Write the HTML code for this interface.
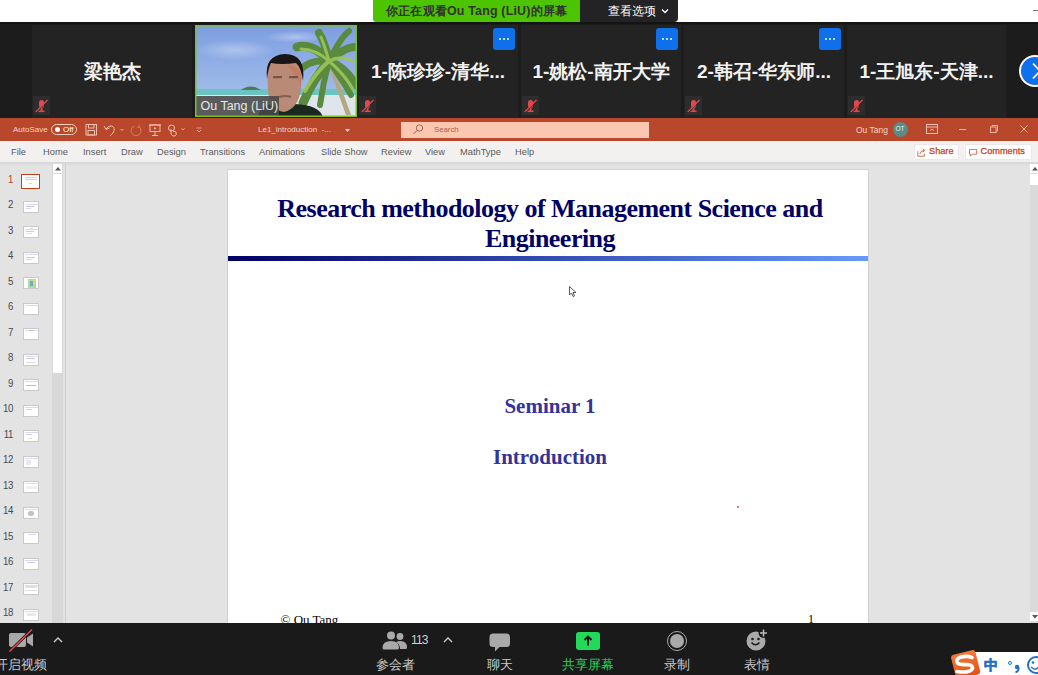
<!DOCTYPE html>
<html><head><meta charset="utf-8">
<style>
*{margin:0;padding:0;box-sizing:border-box}
html,body{width:1038px;height:675px;overflow:hidden;background:#fff;font-family:"Liberation Sans",sans-serif}
.a{position:absolute}
#strip{left:0;top:22px;width:1038px;height:96px;background:#1c1c1c;border-top:2px solid #141414}
.tile{position:absolute;top:1px;height:93px;background:#232323}
.tname{position:absolute;left:0;right:0;top:33.5px;text-align:center;color:#f2f2f2;font-weight:bold;font-size:19px;white-space:nowrap}
.mic{position:absolute;left:1px;top:71px;width:17px;height:19px;background:#2d2d2d}
.mic svg{position:absolute;left:2px;top:3px}
.dots{position:absolute;right:3.5px;top:3px;width:22px;height:22px;background:#0e71eb;border-radius:3px}
.dots i{position:absolute;top:9.5px;width:2px;height:2px;border-radius:50%;background:#fff}
#ppt-title{left:0;top:118px;width:1038px;height:23px;background:#b9472b}
#menu{left:0;top:141px;width:1038px;height:21px;background:#f3f1f0}
#content{left:0;top:162px;width:1038px;height:461px;background:#e3e3e3}
#zbar{left:0;top:623px;width:1038px;height:52px;background:#1a1a1a}
.mi{position:absolute;top:6px;font-size:9.3px;color:#5a5a5a}
#slide{left:228px;top:170px;width:640px;height:453px;background:#fff}
.ttl{position:absolute;left:2px;width:640px;text-align:center;font-family:"Liberation Serif",serif;font-weight:bold;color:#000066;font-size:26px;white-space:nowrap;letter-spacing:-0.52px}
.sub{position:absolute;left:2px;width:640px;text-align:center;font-family:"Liberation Serif",serif;font-weight:bold;color:#333399;font-size:21px}
.tn{position:absolute;width:14px;text-align:right;left:-1.5px;font-size:11px;color:#4a4a4a;letter-spacing:-0.4px;transform:scaleX(0.88);transform-origin:right}
.th{position:absolute;left:23px;width:16px;height:12px;background:#fff;border:1px solid #c9c9c9}
.th i,.sel i{position:absolute;display:block;opacity:0.4}
.zl{position:absolute;top:34px;color:#c8c8c8;font-size:12.5px;white-space:nowrap}
.tb{color:#f6d3c5;font-size:8px}
</style></head><body>
<!-- top white bar -->
<div class="a" style="left:1033px;top:10px;width:5px;height:1px;background:#777"></div>
<!-- green banner -->
<div class="a" style="left:373px;top:0;width:207px;height:22px;background:#4cc400;border-radius:0 0 0 3px"></div>
<div class="a" style="left:386px;top:2.5px;color:#333;font-size:12.4px;font-weight:bold;white-space:nowrap;letter-spacing:0.2px">你正在观看Ou Tang (LiU)的屏幕</div>
<div class="a" style="left:580px;top:0;width:98px;height:22px;background:#232326;border-radius:0 0 4px 0"></div>
<div class="a" style="left:608px;top:3px;color:#fff;font-size:12px;white-space:nowrap">查看选项</div>
<svg class="a" style="left:661px;top:8px" width="8" height="6"><path d="M1 1.5 L4 4.5 L7 1.5" stroke="#fff" stroke-width="1.3" fill="none"/></svg>

<div id="strip" class="a">
  <div class="tile" style="left:32px;width:160px"><div class="tname">梁艳杰</div><div class="mic"><svg width="13" height="14" viewBox="0 0 13 14"><rect x="4" y="1" width="5" height="8" rx="2.5" fill="#e0484c"/><rect x="5.5" y="9" width="2" height="3" fill="#e0484c"/><rect x="3.5" y="11.5" width="6" height="1.6" fill="#e0484c"/><path d="M0.8 13 L12.5 1" stroke="#e0484c" stroke-width="1.3"/><path d="M1.6 13.6 L13 2" stroke="#2d2d2d" stroke-width="0.6"/></svg></div></div>
  <div class="tile" style="left:358px;width:160px"><div class="tname">1-陈珍珍-清华...</div><div class="mic"><svg width="13" height="14" viewBox="0 0 13 14"><rect x="4" y="1" width="5" height="8" rx="2.5" fill="#e0484c"/><rect x="5.5" y="9" width="2" height="3" fill="#e0484c"/><rect x="3.5" y="11.5" width="6" height="1.6" fill="#e0484c"/><path d="M0.8 13 L12.5 1" stroke="#e0484c" stroke-width="1.3"/><path d="M1.6 13.6 L13 2" stroke="#2d2d2d" stroke-width="0.6"/></svg></div><div class="dots"><i style="left:6.7px"></i><i style="left:10.7px"></i><i style="left:14.7px"></i></div></div>
  <div class="tile" style="left:521px;width:160px"><div class="tname">1-姚松-南开大学</div><div class="mic"><svg width="13" height="14" viewBox="0 0 13 14"><rect x="4" y="1" width="5" height="8" rx="2.5" fill="#e0484c"/><rect x="5.5" y="9" width="2" height="3" fill="#e0484c"/><rect x="3.5" y="11.5" width="6" height="1.6" fill="#e0484c"/><path d="M0.8 13 L12.5 1" stroke="#e0484c" stroke-width="1.3"/><path d="M1.6 13.6 L13 2" stroke="#2d2d2d" stroke-width="0.6"/></svg></div><div class="dots"><i style="left:6.7px"></i><i style="left:10.7px"></i><i style="left:14.7px"></i></div></div>
  <div class="tile" style="left:684px;width:160px"><div class="tname">2-韩召-华东师...</div><div class="mic"><svg width="13" height="14" viewBox="0 0 13 14"><rect x="4" y="1" width="5" height="8" rx="2.5" fill="#e0484c"/><rect x="5.5" y="9" width="2" height="3" fill="#e0484c"/><rect x="3.5" y="11.5" width="6" height="1.6" fill="#e0484c"/><path d="M0.8 13 L12.5 1" stroke="#e0484c" stroke-width="1.3"/><path d="M1.6 13.6 L13 2" stroke="#2d2d2d" stroke-width="0.6"/></svg></div><div class="dots"><i style="left:6.7px"></i><i style="left:10.7px"></i><i style="left:14.7px"></i></div></div>
  <div class="tile" style="left:847px;width:159px"><div class="tname">1-王旭东-天津...</div><div class="mic"><svg width="13" height="14" viewBox="0 0 13 14"><rect x="4" y="1" width="5" height="8" rx="2.5" fill="#e0484c"/><rect x="5.5" y="9" width="2" height="3" fill="#e0484c"/><rect x="3.5" y="11.5" width="6" height="1.6" fill="#e0484c"/><path d="M0.8 13 L12.5 1" stroke="#e0484c" stroke-width="1.3"/><path d="M1.6 13.6 L13 2" stroke="#2d2d2d" stroke-width="0.6"/></svg></div></div>
  <!-- video tile -->
  <svg class="a" style="left:195px;top:1px" width="162" height="92" viewBox="0 0 162 92">
    <defs>
      <linearGradient id="sky" x1="0" y1="0" x2="0" y2="1">
        <stop offset="0" stop-color="#7c9de0"/><stop offset="0.45" stop-color="#92b0e6"/><stop offset="1" stop-color="#adc5ea"/>
      </linearGradient>
      <radialGradient id="cl" cx="0.5" cy="0.5" r="0.5"><stop offset="0" stop-color="#c0d0f0" stop-opacity="0.7"/><stop offset="1" stop-color="#c0d0f0" stop-opacity="0"/></radialGradient>
    </defs>
    <rect x="0" y="0" width="162" height="92" fill="url(#sky)"/>
    <ellipse cx="40" cy="25" rx="40" ry="10" fill="url(#cl)"/>
    <ellipse cx="100" cy="12" rx="30" ry="6" fill="url(#cl)"/>
    <rect x="0" y="64" width="162" height="7" fill="#6cc4c2"/>
    <rect x="0" y="70" width="162" height="22" fill="#dfe5ea"/>
    <path d="M46 65 Q52 60 60 62 L66 65 Z" fill="#4f7a5a"/>
    <!-- palm trunk -->
    <path d="M134 42 Q141 62 151 90 L156 90 Q146 62 138 42 Z" fill="#b3a882"/>
    <g stroke="#5a8a3e" fill="none" stroke-linecap="round">
      <path d="M134 36 Q118 18 102 22" stroke-width="9"/>
      <path d="M134 36 Q114 34 104 46" stroke-width="7"/>
      <path d="M134 36 Q118 54 108 78" stroke-width="9"/>
      <path d="M134 36 Q128 58 125 80" stroke-width="6"/>
      <path d="M134 36 Q150 22 160 22" stroke-width="8"/>
      <path d="M134 36 Q152 44 160 60" stroke-width="9"/>
      <path d="M134 36 Q130 18 124 8" stroke-width="8"/>
      <path d="M134 36 Q146 12 154 6" stroke-width="6"/>
      <path d="M134 36 Q148 56 156 70" stroke-width="6"/>
    </g>
    <g stroke="#9cc65a" fill="none" stroke-linecap="round" opacity="0.9">
      <path d="M134 36 Q120 48 110 66" stroke-width="4"/>
      <path d="M134 36 Q146 30 158 36" stroke-width="3.5"/>
      <path d="M134 36 Q130 22 126 12" stroke-width="3"/>
      <path d="M134 36 Q120 24 106 24" stroke-width="3"/>
      <path d="M134 36 Q150 50 158 64" stroke-width="3"/>
    </g>
    <!-- person -->
    <path d="M63 92 Q64 80 80 79 L100 79 Q124 80 128 92 Z" fill="#1a2820"/>
    <path d="M72 44 Q72 31 90 31 Q108 31 107 47 L106 64 Q103 84 89 87 Q75 85 73 66 Z" fill="#b98a76"/>
    <path d="M92 40 Q104 40 106 52 L106 62 Q100 48 92 40 Z" fill="#d07050" opacity="0.5"/>
    <path d="M72 54 Q69 30 90 29 Q111 29 108 56 Q106 42 101 38 Q86 40 76 38 Q73 44 72 54 Z" fill="#1a1616"/>
    <rect x="78" y="51" width="9" height="2.2" fill="#4a3028" opacity="0.6"/>
    <rect x="94" y="51" width="9" height="2.2" fill="#4a3028" opacity="0.6"/>
    <path d="M84 72 Q90 70 96 72" stroke="#6a4038" stroke-width="2" fill="none" opacity="0.6"/>
    <rect x="0" y="71" width="84" height="20" fill="#484848" opacity="0.88"/>
    <text x="5.5" y="85" font-family="Liberation Sans" font-size="12.5" fill="#e6e6e6">Ou Tang (LiU)</text>
    <rect x="0.75" y="0.75" width="160.5" height="90.5" fill="none" stroke="#7ec01c" stroke-width="1.5"/>
  </svg>
  <!-- right arrow circle -->
  <div class="a" style="left:1019px;top:31px;width:32px;height:32px;border-radius:50%;background:#fff"></div>
  <div class="a" style="left:1021px;top:33px;width:28px;height:28px;border-radius:50%;background:#0e71eb"></div>
  <svg class="a" style="left:1031px;top:38px" width="10" height="18"><path d="M2 1.5 L9 9 L2 16.5" stroke="#fff" stroke-width="1.8" fill="none"/></svg>
</div>

<div id="ppt-title" class="a">
  <span class="a tb" style="left:13px;top:7px">AutoSave</span>
  <div class="a" style="left:51px;top:5.5px;width:26px;height:11px;border:1px solid #f6d3c5;border-radius:6px"></div>
  <div class="a" style="left:54.5px;top:8.5px;width:5px;height:5px;border-radius:50%;background:#fff"></div>
  <span class="a tb" style="left:63px;top:7px;font-size:8px;color:#fff">Off</span>
  <svg class="a" style="left:85px;top:6px" width="13" height="12" viewBox="0 0 13 12"><rect x="1" y="0.5" width="10.5" height="10.5" fill="none" stroke="#f0c0ae" stroke-width="1"/><rect x="3.5" y="0.5" width="5.5" height="3.5" fill="none" stroke="#f0c0ae" stroke-width="1"/><rect x="3" y="6.5" width="6.5" height="4.5" fill="none" stroke="#f0c0ae" stroke-width="1"/></svg>
  <svg class="a" style="left:103px;top:6px" width="24" height="13" viewBox="0 0 24 13"><path d="M3 5 Q6 1 9 2 Q13 4 10 9 L7 12" stroke="#f0c0ae" stroke-width="1" fill="none"/><path d="M1 2 L3 5.5 L6.5 4" stroke="#f0c0ae" stroke-width="1" fill="none"/><path d="M17.5 5 L19 6.5 L20.5 5" stroke="#f0c0ae" stroke-width="0.9" fill="none"/></svg>
  <svg class="a" style="left:130px;top:6px" width="13" height="13" viewBox="0 0 13 13"><path d="M4 2 A5 5 0 1 0 9 2.5" stroke="#d9806a" stroke-width="1" fill="none"/><path d="M9 0.5 L9.5 3 L7 3.5" stroke="#d9806a" stroke-width="0.9" fill="none"/></svg>
  <svg class="a" style="left:149px;top:6px" width="12" height="13" viewBox="0 0 12 13"><rect x="1" y="1" width="10" height="6.5" fill="none" stroke="#f0c0ae" stroke-width="1"/><path d="M0 1 L12 1" stroke="#f0c0ae" stroke-width="1"/><path d="M5 3 L7.5 4.3 L5 5.6 Z" fill="#f0c0ae"/><path d="M6 7.5 L6 11 M3 11.5 L9 11.5" stroke="#f0c0ae" stroke-width="1"/></svg>
  <svg class="a" style="left:167px;top:6px" width="22" height="13" viewBox="0 0 22 13"><circle cx="4.5" cy="4" r="3" fill="none" stroke="#f0c0ae" stroke-width="1"/><path d="M4 5 L4 10 Q5 12.5 8 12 Q10 11 9 8 L6 7" stroke="#f0c0ae" stroke-width="1" fill="none"/><path d="M14.5 4.5 L16 6 L17.5 4.5" stroke="#f0c0ae" stroke-width="0.9" fill="none"/></svg>
  <svg class="a" style="left:196px;top:9px" width="6" height="6" viewBox="0 0 6 6"><path d="M0.5 1 L5.5 1" stroke="#f0c0ae" stroke-width="0.7"/><path d="M1 3 L3 5 L5 3" stroke="#f0c0ae" stroke-width="0.8" fill="none"/></svg>
  <span class="a tb" style="left:258px;top:7px;font-size:8px">Le1_introduction &nbsp;-...</span>
  <svg class="a" style="left:345px;top:11px" width="5" height="3"><path d="M0 0 L5 0 L2.5 3 Z" fill="#f6d3c5"/></svg>
  <div class="a" style="left:401px;top:4px;width:248px;height:15.5px;background:#fcc7b1"></div>
  <svg class="a" style="left:412px;top:6px" width="12" height="11" viewBox="0 0 12 11"><circle cx="7.5" cy="4" r="3.2" fill="none" stroke="#9a5a48" stroke-width="0.9"/><path d="M5.2 6.3 L1.5 10" stroke="#9a5a48" stroke-width="1"/></svg>
  <span class="a" style="left:434px;top:6.5px;font-size:7.8px;color:#a8604c">Search</span>
  <span class="a tb" style="left:856px;top:7px;font-size:8.5px">Ou Tang</span>
  <div class="a" style="left:893px;top:3.5px;width:15px;height:15px;border-radius:50%;background:#5c8a85"></div>
  <span class="a" style="left:895.5px;top:7px;font-size:6.5px;color:#e8f0ee">OT</span>
  <svg class="a" style="left:926px;top:6px" width="12" height="10" viewBox="0 0 12 10"><rect x="0.5" y="0.5" width="11" height="9" fill="none" stroke="#f0c0ae" stroke-width="1"/><path d="M0.5 3 L11.5 3" stroke="#f0c0ae" stroke-width="1"/><path d="M4 6.5 L6 5 L8 6.5" stroke="#f0c0ae" stroke-width="0.9" fill="none"/></svg>
  <div class="a" style="left:959px;top:11px;width:7px;height:1px;background:#f0c0ae"></div>
  <svg class="a" style="left:990px;top:7px" width="8" height="8" viewBox="0 0 8 8"><rect x="0.5" y="2" width="5.5" height="5.5" fill="none" stroke="#f0c0ae" stroke-width="0.9"/><path d="M2 2 L2 0.5 L7.5 0.5 L7.5 6 L6 6" stroke="#f0c0ae" stroke-width="0.9" fill="none"/></svg>
  <svg class="a" style="left:1020px;top:7px" width="8" height="8" viewBox="0 0 8 8"><path d="M0.5 0.5 L7.5 7.5 M7.5 0.5 L0.5 7.5" stroke="#f0c0ae" stroke-width="0.9"/></svg>
</div>

<div id="menu" class="a">
  <span class="mi" style="left:11px">File</span>
  <span class="mi" style="left:43px">Home</span>
  <span class="mi" style="left:83px">Insert</span>
  <span class="mi" style="left:121px">Draw</span>
  <span class="mi" style="left:157px">Design</span>
  <span class="mi" style="left:200px">Transitions</span>
  <span class="mi" style="left:259px">Animations</span>
  <span class="mi" style="left:321px">Slide Show</span>
  <span class="mi" style="left:381px">Review</span>
  <span class="mi" style="left:425px">View</span>
  <span class="mi" style="left:460px">MathType</span>
  <span class="mi" style="left:515px">Help</span>
  <div class="a" style="left:914px;top:3px;width:45px;height:16px;background:#fff;border:1px solid #ebe9e8;border-radius:2px"></div>
  <svg class="a" style="left:917px;top:7px" width="9" height="9" viewBox="0 0 11 11"><path d="M1 4 L1 10 L9 10 L9 7" stroke="#c43e1c" stroke-width="0.9" fill="none"/><path d="M3.5 7.5 Q4 3 9 3 M7 1 L9.5 3 L7 5" stroke="#c43e1c" stroke-width="0.9" fill="none"/></svg>
  <span class="a" style="left:929px;top:5px;font-size:9.2px;color:#c43e1c;-webkit-text-stroke:0.25px #c43e1c">Share</span>
  <div class="a" style="left:965px;top:3px;width:67px;height:16px;background:#fff;border:1px solid #ebe9e8;border-radius:2px"></div>
  <svg class="a" style="left:969px;top:7.5px" width="9" height="8" viewBox="0 0 11 10"><path d="M0.5 0.5 L9.5 0.5 L9.5 6.5 L4 6.5 L1.5 9 L1.5 6.5 L0.5 6.5 Z" stroke="#c43e1c" stroke-width="0.9" fill="none"/></svg>
  <span class="a" style="left:980.5px;top:5px;font-size:9.2px;color:#c43e1c;-webkit-text-stroke:0.25px #c43e1c">Comments</span>
</div>

<div id="content" class="a">
  <div class="a" style="left:0;top:0;width:1038px;height:4px;background:linear-gradient(#d6d6d6,#e3e3e3)"></div>
  <!-- thumbnail panel -->
    <div class="a" style="left:52px;top:2px;width:11px;height:459px;background:#d8d8d8"></div>
  <div class="a" style="left:53px;top:2px;width:9px;height:9px;background:#fff"></div>
  <svg class="a" style="left:55px;top:5px" width="6" height="4"><path d="M0 3.5 L3 0 L6 3.5 Z" fill="#555"/></svg>
  <div class="a" style="left:53px;top:12px;width:9px;height:199px;background:#fff"></div>
  <div class="a" style="left:65px;top:0;width:1px;height:461px;background:#d0d0d0"></div>
  <!-- right scrollbar -->
  <div class="a" style="left:1030px;top:2px;width:8px;height:459px;background:#dadada"></div>
  <div class="a" style="left:1030px;top:2px;width:8px;height:9px;background:#fff"></div>
  <svg class="a" style="left:1032px;top:5px" width="6" height="4"><path d="M0 3.5 L3 0 L6 3.5 Z" fill="#555"/></svg>
  <div class="a" style="left:1030px;top:12px;width:8px;height:11px;background:#fff"></div>
  <div class="a" style="left:1030px;top:450px;width:8px;height:9px;background:#fff"></div>
  <svg class="a" style="left:1032px;top:453px" width="6" height="4"><path d="M0 0 L6 0 L3 3.5 Z" fill="#555"/></svg>
</div>
<div class="a" style="left:0;top:162px;width:70px;height:461px">
<div class="tn" style="top:10.5px;color:#c43e1c">1</div>
<div class="a sel" style="left:21px;top:12px;width:19px;height:15px;border:1.5px solid #c43e1c;background:#fff"><div class="a" style="left:0.5px;top:0.5px;width:15px;height:11px"><i style="left:2px;top:1px;width:12px;height:1px;background:#8a8ab8"></i><i style="left:2px;top:3px;width:12px;height:0.6px;background:#7a8ad8"></i><i style="left:6px;top:7px;width:3px;height:0.6px;background:#9999c8"></i></div></div>
<div class="tn" style="top:36.0px">2</div><div class="th" style="top:38.5px"><i style="left:1px;top:2px;width:13px;height:0.6px;background:#9aa8e0"></i><i style="left:2px;top:4px;width:8px;height:1px;background:#6a6ab0"></i><i style="left:2px;top:6px;width:5px;height:0.6px;background:#9a9ac8"></i></div>
<div class="tn" style="top:61.5px">3</div><div class="th" style="top:64.0px"><i style="left:6px;top:1px;width:3px;height:0.6px;background:#999"></i><i style="left:1px;top:2px;width:13px;height:0.6px;background:#9aa8e0"></i><i style="left:2px;top:4px;width:8px;height:0.8px;background:#7a7ab8"></i><i style="left:2px;top:6px;width:6px;height:0.6px;background:#aaa"></i></div>
<div class="tn" style="top:87.0px">4</div><div class="th" style="top:89.5px"><i style="left:1px;top:1px;width:13px;height:0.6px;background:#9aa8e0"></i><i style="left:2px;top:4px;width:9px;height:0.8px;background:#7a7ab8"></i><i style="left:2px;top:6px;width:6px;height:0.6px;background:#aaa"></i></div>
<div class="tn" style="top:112.5px">5</div><div class="th" style="top:115.0px"><i style="left:4px;top:1px;width:8px;height:9px;background:#a8d890;opacity:0.9"></i><i style="left:6px;top:3px;width:3px;height:5px;background:#60a8e0;opacity:0.9"></i><i style="left:9px;top:2px;width:2px;height:4px;background:#e8d860;opacity:0.9"></i></div>
<div class="tn" style="top:138.0px">6</div><div class="th" style="top:140.5px"><i style="left:1px;top:1px;width:13px;height:0.6px;background:#9aa8e0"></i></div>
<div class="tn" style="top:163.5px">7</div><div class="th" style="top:166.0px"><i style="left:1px;top:1px;width:13px;height:0.6px;background:#9aa8e0"></i><i style="left:5px;top:1px;width:4px;height:0.6px;background:#888"></i></div>
<div class="tn" style="top:189.0px">8</div><div class="th" style="top:191.5px"><i style="left:1px;top:1px;width:13px;height:0.6px;background:#9aa8e0"></i><i style="left:2px;top:3px;width:9px;height:0.7px;background:#8888b0"></i><i style="left:2px;top:7px;width:10px;height:0.6px;background:#aaa"></i></div>
<div class="tn" style="top:214.5px">9</div><div class="th" style="top:217.0px"><i style="left:1px;top:1px;width:13px;height:0.6px;background:#9aa8e0"></i><i style="left:2px;top:5px;width:10px;height:1px;background:#555"></i></div>
<div class="tn" style="top:240.0px">10</div><div class="th" style="top:242.5px"><i style="left:1px;top:1px;width:13px;height:0.6px;background:#9aa8e0"></i><i style="left:2px;top:3px;width:6px;height:0.8px;background:#8888b0"></i></div>
<div class="tn" style="top:265.5px">11</div><div class="th" style="top:268.0px"><i style="left:1px;top:1px;width:13px;height:0.6px;background:#9aa8e0"></i><i style="left:2px;top:3px;width:6px;height:0.8px;background:#8888b0"></i><i style="left:4px;top:7px;width:4px;height:0.6px;background:#aaa"></i></div>
<div class="tn" style="top:291.0px">12</div><div class="th" style="top:293.5px"><i style="left:1px;top:1px;width:13px;height:0.6px;background:#9aa8e0"></i><i style="left:2px;top:3px;width:5px;height:5px;background:#c8c8c8"></i></div>
<div class="tn" style="top:316.5px">13</div><div class="th" style="top:319.0px"><i style="left:1px;top:1px;width:13px;height:0.6px;background:#9aa8e0"></i><i style="left:2px;top:4px;width:11px;height:3px;background:#d8d8e8"></i></div>
<div class="tn" style="top:342.0px">14</div><div class="th" style="top:344.5px"><i style="left:1px;top:1px;width:13px;height:0.6px;background:#9aa8e0"></i><i style="left:4px;top:3px;width:6px;height:5px;background:#666;border-radius:40%"></i></div>
<div class="tn" style="top:367.5px">15</div><div class="th" style="top:370.0px"><i style="left:4px;top:1px;width:8px;height:0.6px;background:#9aa8e0"></i></div>
<div class="tn" style="top:393.0px">16</div><div class="th" style="top:395.5px"><i style="left:1px;top:1px;width:13px;height:0.6px;background:#9aa8e0"></i><i style="left:3px;top:3px;width:8px;height:1px;background:#888"></i></div>
<div class="tn" style="top:418.5px">17</div><div class="th" style="top:421.0px"><i style="left:1px;top:1px;width:13px;height:0.6px;background:#9aa8e0"></i><i style="left:1px;top:2px;width:12px;height:2px;background:#b0b0c8"></i><i style="left:1px;top:6px;width:12px;height:1px;background:#b0b0b0"></i></div>
<div class="tn" style="top:444.0px">18</div><div class="th" style="top:446.5px"><i style="left:1px;top:1px;width:13px;height:0.6px;background:#9aa8e0"></i><i style="left:3px;top:3px;width:9px;height:3px;background:#c8c8d8"></i></div>
</div>

<div class="a" style="left:227px;top:169px;width:642px;height:454px;background:#d2d2d2"></div>
<div id="slide" class="a">
  <div class="ttl" style="top:24px">Research methodology of Management Science and</div>
  <div class="ttl" style="top:54px">Engineering</div>
  <div class="a" style="left:0;top:86px;width:640px;height:5px;background:linear-gradient(90deg,#000066,#6699ff)"></div>
  <div class="sub" style="top:224px">Seminar 1</div>
  <div class="sub" style="top:275px">Introduction</div>
  <div class="a" style="left:52.5px;top:442px;font-family:'Liberation Serif',serif;font-size:13px;line-height:15px">© Ou Tang</div>
  <div class="a" style="left:580px;top:442px;font-family:'Liberation Serif',serif;font-size:12px;line-height:15px">1</div>
  <div class="a" style="left:509px;top:336px;width:2px;height:2px;background:#e04040;border-radius:50%"></div>
</div>
<!-- cursor -->
<svg class="a" style="left:569px;top:286px" width="8" height="11" viewBox="0 0 8 11"><path d="M0.5 0.5 L0.5 9 L2.5 7 L4 10.5 L5.5 10 L4 6.5 L7 6.5 Z" fill="#fff" stroke="#333" stroke-width="0.8"/></svg>

<div id="zbar" class="a">
  <!-- camera -->
  <svg class="a" style="left:8px;top:5px" width="28" height="25" viewBox="0 0 28 25"><rect x="1" y="5" width="17" height="14" rx="2" fill="#a9a9a9"/><path d="M19 9.5 L25 5.5 L25 18.5 L19 14.5 Z" fill="#a9a9a9"/><path d="M1.5 23.5 L24 1.5" stroke="#1a1a1a" stroke-width="3"/><path d="M1.5 23.5 L24 1.5" stroke="#e5484d" stroke-width="1.5"/></svg>
  <svg class="a" style="left:53px;top:14px" width="10" height="6"><path d="M1 5 L5 1 L9 5" stroke="#ccc" stroke-width="1.4" fill="none"/></svg>
  <div class="zl" style="left:-5px">开启视频</div>
  <!-- participants -->
  <svg class="a" style="left:382px;top:8px" width="26" height="20" viewBox="0 0 26 20"><circle cx="9" cy="4.5" r="4" fill="#a9a9a9"/><circle cx="18" cy="5.5" r="3.4" fill="#a9a9a9"/><path d="M0.5 17 Q0.5 10 9 10 Q17 10 17 17 Q17 18.5 15 18.5 L2.5 18.5 Q0.5 18.5 0.5 17 Z" fill="#a9a9a9"/><path d="M14 11 Q16 10 18.5 10 Q25 10 25 16.5 Q25 18 23.5 18 L18 18 Q18 13 14 11 Z" fill="#a9a9a9"/></svg>
  <span class="a" style="left:411px;top:10px;font-size:12px;color:#d0d0d0;letter-spacing:-0.9px">113</span>
  <svg class="a" style="left:443px;top:14px" width="10" height="6"><path d="M1 5 L5 1 L9 5" stroke="#ccc" stroke-width="1.4" fill="none"/></svg>
  <div class="zl" style="left:376px">参会者</div>
  <!-- chat -->
  <svg class="a" style="left:489px;top:10px" width="22" height="19" viewBox="0 0 22 19"><rect x="0.5" y="0.5" width="20.5" height="13.5" rx="3.5" fill="#a9a9a9"/><path d="M6 13 L6 18.5 L11.5 13 Z" fill="#a9a9a9"/></svg>
  <div class="zl" style="left:487px">聊天</div>
  <!-- share -->
  <div class="a" style="left:576px;top:9px;width:24px;height:18px;border-radius:3px;background:#23d959"></div>
  <svg class="a" style="left:583px;top:12px" width="10" height="12" viewBox="0 0 10 12"><path d="M5 10.5 L5 2 M1.5 5 L5 1.5 L8.5 5" stroke="#111" stroke-width="1.8" fill="none"/></svg>
  <div class="zl" style="left:562px;color:#23d959">共享屏幕</div>
  <!-- record -->
  <div class="a" style="left:667px;top:8px;width:20px;height:20px;border-radius:50%;border:1.6px solid #a9a9a9"></div>
  <div class="a" style="left:670px;top:11px;width:14px;height:14px;border-radius:50%;background:#a9a9a9"></div>
  <div class="zl" style="left:664px">录制</div>
  <!-- emoji -->
  <svg class="a" style="left:745px;top:5px" width="26" height="25" viewBox="0 0 26 25"><circle cx="11" cy="13" r="9.5" fill="#a9a9a9"/><circle cx="18.5" cy="5" r="5" fill="#1a1a1a"/><path d="M18.5 1.5 L18.5 8.5 M15 5 L22 5" stroke="#bdbdbd" stroke-width="1.5"/><circle cx="7.5" cy="11" r="1.3" fill="#1a1a1a"/><circle cx="13.5" cy="11" r="1.3" fill="#1a1a1a"/><path d="M6.5 14.5 Q10.5 19 14.5 14.5" stroke="#1a1a1a" stroke-width="1.5" fill="none"/></svg>
  <div class="zl" style="left:744px">表情</div>
  <!-- sogou -->
  <div class="a" style="left:973px;top:29px;width:65px;height:23px;background:#fff"></div>
  <svg class="a" style="left:946px;top:23px" width="38" height="29" viewBox="0 0 38 29">
    <defs><linearGradient id="sg" x1="0" y1="0" x2="0" y2="1"><stop offset="0" stop-color="#f47a3a"/><stop offset="1" stop-color="#e4500e"/></linearGradient></defs>
    <g transform="rotate(-14 20 18)"><rect x="7" y="6" width="25" height="25" rx="3" fill="url(#sg)"/></g>
    <path d="M26 11.5 Q22 9.5 15 11 Q9 13 11.5 17 Q13.5 19 20 18.5 Q27 18.5 26.5 22.5 Q25 26.5 14 26 L11 25.5" stroke="#fff" stroke-width="3.6" fill="none" stroke-linecap="round"/>
  </svg>
  <span class="a" style="left:983.5px;top:34px;font-size:14px;font-weight:bold;color:#1f72cc;-webkit-text-stroke:0.5px #1f72cc">中</span>
  <div class="a" style="left:1008px;top:38px;width:4px;height:4px;border-radius:50%;border:1.2px solid #1f72cc"></div>
  <svg class="a" style="left:1014px;top:41px" width="6" height="9" viewBox="0 0 6 9"><circle cx="3" cy="3" r="2.2" fill="#1f72cc"/><path d="M4.8 3.5 Q5 7 1.5 8.5" stroke="#1f72cc" stroke-width="1.8" fill="none"/></svg>
  <svg class="a" style="left:1026px;top:33px" width="12" height="18" viewBox="0 0 12 18"><circle cx="10" cy="9" r="8" fill="none" stroke="#1f72cc" stroke-width="2"/><circle cx="7" cy="6.5" r="1.3" fill="#1f72cc"/><path d="M5 11 Q10 15.5 12 11" stroke="#1f72cc" stroke-width="1.6" fill="none"/></svg>
</div>
</body></html>
